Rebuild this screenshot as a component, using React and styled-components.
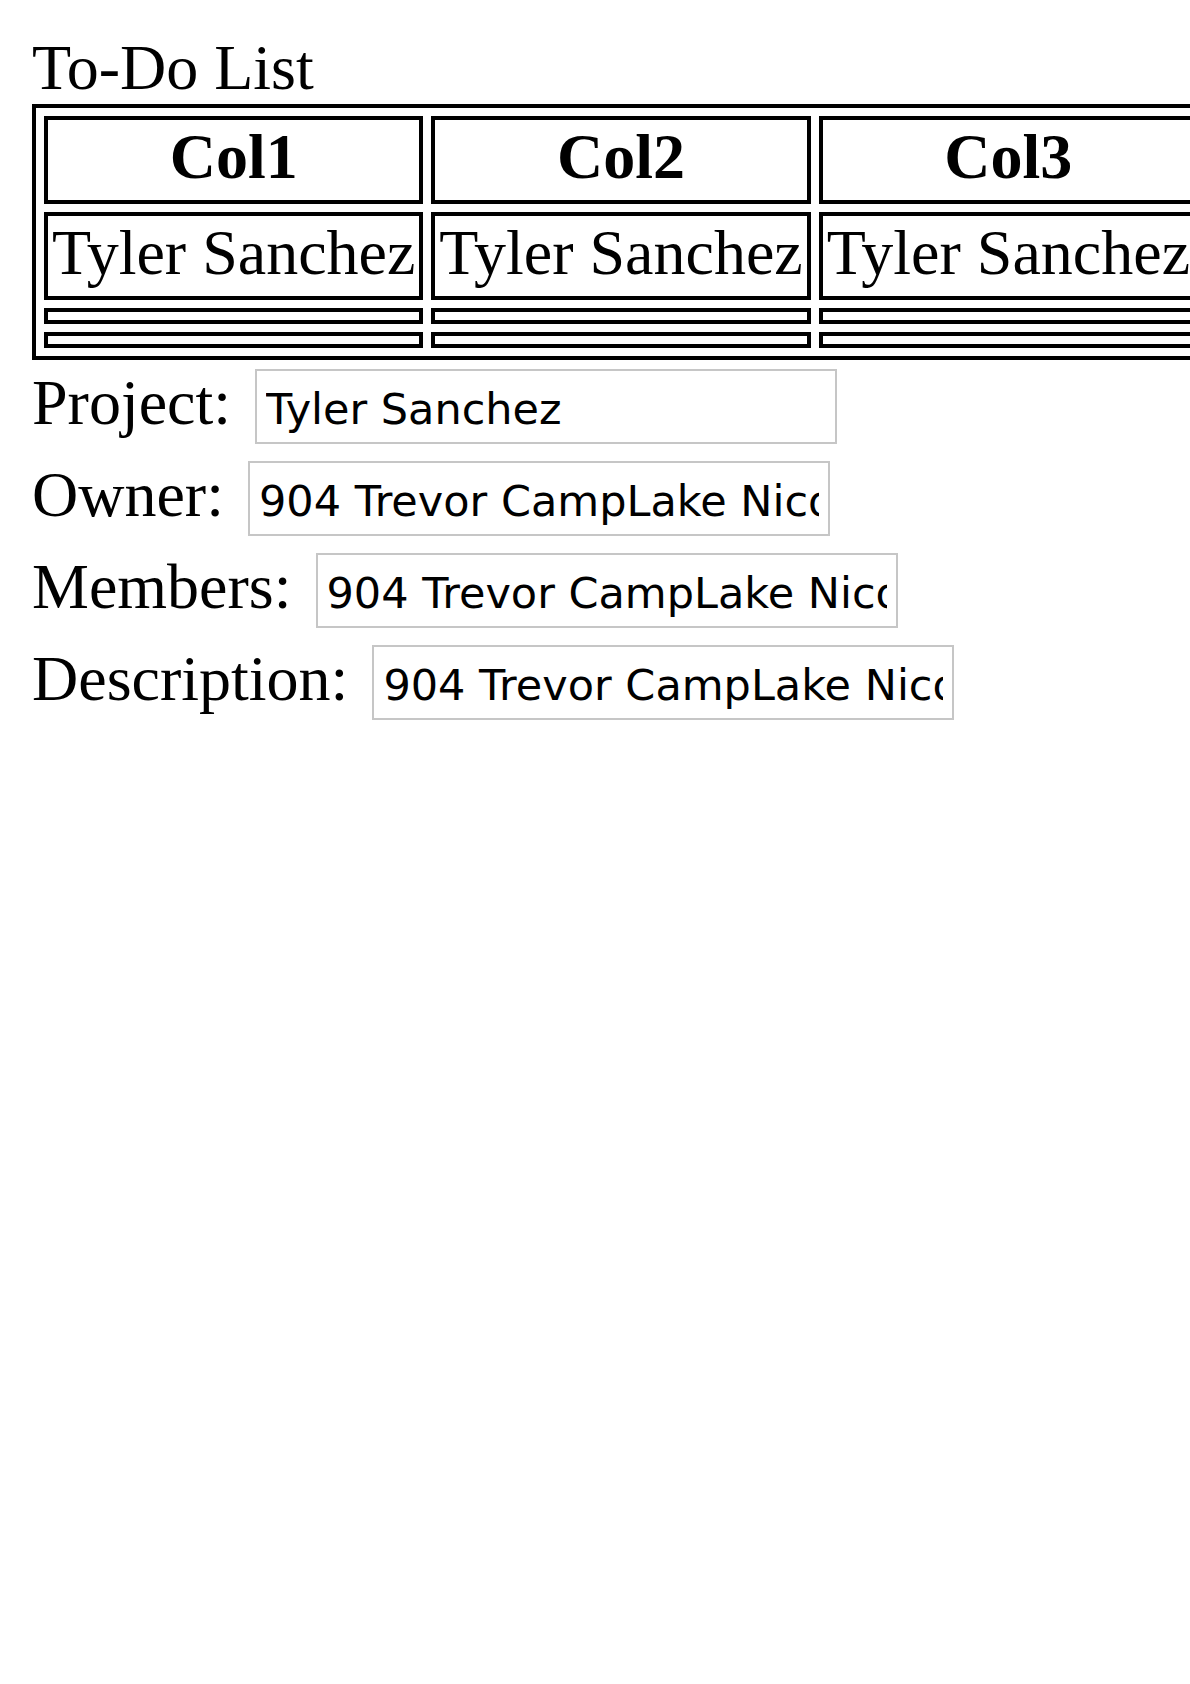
import React from 'react'
import styled, { createGlobalStyle } from 'styled-components'

const GlobalStyle = createGlobalStyle`
  html {
    overflow-x: hidden;
  }
  body {
    margin: 32px 0 32px 32px;
    background: #fff;
    color: #000;
    font-family: "Liberation Serif", "Times New Roman", serif;
    font-size: 64px;
  }
`

const Title = styled.div`
  line-height: 72px;
`

const Table = styled.table`
  border: 4px solid #000;
  border-spacing: 8px;
  white-space: nowrap;
`

const Cell = styled.td`
  border: 4px solid #000;
  padding: 4px 4px 10px;
  line-height: 66px;
  text-align: ${p => (p.$head ? 'center' : 'left')};
  font-weight: ${p => (p.$head ? 'bold' : 'normal')};
`

const EmptyCell = styled.td`
  border: 4px solid #000;
  padding: 4px;
  line-height: 0;
`

const Form = styled.div`
  display: flex;
  flex-direction: column;
`

const Row = styled.div`
  display: flex;
  align-items: baseline;
  gap: 24px;
`

const Label = styled.span`
  line-height: 72px;
  white-space: nowrap;
`

const Field = styled.input`
  box-sizing: border-box;
  width: 582px;
  height: 75px;
  margin: 9px 0 8px;
  padding: 5px 9px 0;
  border: 2px solid #c6c6c6;
  background: #fff;
  color: #000;
  font-family: "DejaVu Sans", Verdana, sans-serif;
  font-size: 43px;
  outline: none;
`

const cols = ['Col1', 'Col2', 'Col3']
const address = '904 Trevor CampLake Nicole'

const fields = [
  { label: 'Project:', value: 'Tyler Sanchez' },
  { label: 'Owner:', value: address },
  { label: 'Members:', value: address },
  { label: 'Description:', value: address },
]

export default function App() {
  return (
    <>
      <GlobalStyle />
      <Title>To-Do List</Title>
      <Table>
        <tbody>
          <tr>
            {cols.map(c => <Cell as="th" $head key={c}>{c}</Cell>)}
          </tr>
          <tr>
            {cols.map(c => <Cell key={c}>Tyler Sanchez</Cell>)}
          </tr>
          <tr>
            {cols.map(c => <EmptyCell key={c} />)}
          </tr>
          <tr>
            {cols.map(c => <EmptyCell key={c} />)}
          </tr>
        </tbody>
      </Table>
      <Form>
        {fields.map(f => (
          <Row key={f.label}>
            <Label>{f.label}</Label>
            <Field type="text" value={f.value} readOnly />
          </Row>
        ))}
      </Form>
    </>
  )
}
